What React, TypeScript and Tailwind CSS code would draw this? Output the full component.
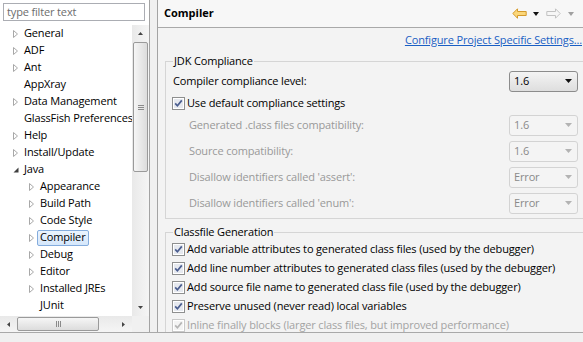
import React from "react";

type Node = { label: string; level: 0 | 1; kind: "closed" | "open" | "leaf"; selected?: boolean };

const tree: Node[] = [
  { label: "General", level: 0, kind: "closed" },
  { label: "ADF", level: 0, kind: "closed" },
  { label: "Ant", level: 0, kind: "closed" },
  { label: "AppXray", level: 0, kind: "leaf" },
  { label: "Data Management", level: 0, kind: "closed" },
  { label: "GlassFish Preferences", level: 0, kind: "leaf" },
  { label: "Help", level: 0, kind: "closed" },
  { label: "Install/Update", level: 0, kind: "closed" },
  { label: "Java", level: 0, kind: "open" },
  { label: "Appearance", level: 1, kind: "closed" },
  { label: "Build Path", level: 1, kind: "closed" },
  { label: "Code Style", level: 1, kind: "closed" },
  { label: "Compiler", level: 1, kind: "closed", selected: true },
  { label: "Debug", level: 1, kind: "closed" },
  { label: "Editor", level: 1, kind: "closed" },
  { label: "Installed JREs", level: 1, kind: "closed" },
  { label: "JUnit", level: 1, kind: "leaf" },
];

const compat = [
  { label: "Generated .class files compatibility:", value: "1.6" },
  { label: "Source compatibility:", value: "1.6" },
  { label: "Disallow identifiers called 'assert':", value: "Error" },
  { label: "Disallow identifiers called 'enum':", value: "Error" },
];

const classfile = [
  { label: "Add variable attributes to generated class files (used by the debugger)" },
  { label: "Add line number attributes to generated class files (used by the debugger)" },
  { label: "Add source file name to generated class file (used by the debugger)" },
  { label: "Preserve unused (never read) local variables" },
  { label: "Inline finally blocks (larger class files, but improved performance)", disabled: true },
];

function Twisty({ kind }: { kind: Node["kind"] }) {
  if (kind === "leaf") return null;
  if (kind === "open")
    return (
      <svg width="6" height="6" viewBox="0 0 6 6" className="mt-[1px]">
        <path d="M5.5 0.5 V5.5 H0.5 Z" fill="#3f3f3f" />
      </svg>
    );
  return (
    <svg width="5" height="8" viewBox="0 0 5 8">
      <path d="M0.5 0.5 L4.5 4 L0.5 7.5 Z" fill="#fff" stroke="#a8a8a8" />
    </svg>
  );
}

function Checkbox({ disabled }: { disabled?: boolean }) {
  return (
    <svg width="13" height="13" viewBox="0 0 13 13" className="shrink-0">
      <rect x="0.5" y="0.5" width="12" height="12" fill="#fff" stroke={disabled ? "#c9c9c9" : "#8e8f8f"} />
      <rect x="2" y="2" width="9" height="9" fill={disabled ? "#f4f4f4" : "#e6e9ef"} />
      <path
        d="M3.2 6.4 L5.4 8.8 L9.8 3.4"
        fill="none"
        stroke={disabled ? "#b5b5b5" : "#4a5d8f"}
        strokeWidth="1.7"
      />
    </svg>
  );
}

function Combo({ value, disabled }: { value: string; disabled?: boolean }) {
  return (
    <div
      className={`flex h-[21px] w-[69px] shrink-0 items-center justify-between rounded-[3px] border pl-[4px] pr-[5px] ${
        disabled
          ? "border-[#d3d3d3] bg-[#f4f4f4] text-[#8a8a8a]"
          : "border-[#8c8c8c] bg-gradient-to-b from-[#f4f4f4] to-[#dedede] text-black"
      }`}
    >
      <span>{value}</span>
      <svg width="7" height="4" viewBox="0 0 7 4">
        <path d="M0 0 H7 L3.5 4 Z" fill={disabled ? "#b3b3b3" : "#111"} />
      </svg>
    </div>
  );
}

function NavArrow({ back }: { back?: boolean }) {
  return (
    <svg width="15" height="11" viewBox="0 0 15 11" className={back ? "" : "scale-x-[-1]"}>
      <path
        d="M0.8 5.5 L5.5 0.8 V3.5 H14.2 V7.5 H5.5 V10.2 Z"
        fill={back ? "#fbd77a" : "#f6f6f6"}
        stroke={back ? "#d49a2c" : "#c2c2c2"}
        strokeLinejoin="round"
      />
    </svg>
  );
}

function SmallDown({ color }: { color: string }) {
  return (
    <svg width="6" height="4" viewBox="0 0 6 4">
      <path d="M0 0 H6 L3 4 Z" fill={color} />
    </svg>
  );
}

function VScroll() {
  return (
    <div className="flex w-[17px] shrink-0 flex-col bg-gradient-to-r from-[#e9e9e9] to-[#f5f5f5]">
      <div className="flex h-[17px] items-center justify-center">
        <svg width="5" height="3" viewBox="0 0 5 3">
          <path d="M0 3 H5 L2.5 0 Z" fill="#444" />
        </svg>
      </div>
      <div className="mx-[1px] flex h-[130px] items-center justify-center rounded-[2px] border border-[#9a9a9a] bg-gradient-to-r from-[#f6f6f6] to-[#dcdcdc]">
        <div className="flex flex-col gap-[1px]">
          <div className="h-[1px] w-[6px] bg-[#8a8a8a]" />
          <div className="h-[1px] w-[6px] bg-[#8a8a8a]" />
          <div className="h-[1px] w-[6px] bg-[#8a8a8a]" />
        </div>
      </div>
      <div className="flex-1" />
      <div className="flex h-[17px] items-center justify-center">
        <svg width="5" height="3" viewBox="0 0 5 3">
          <path d="M0 0 H5 L2.5 3 Z" fill="#444" />
        </svg>
      </div>
    </div>
  );
}

function HScroll() {
  return (
    <div className="flex h-[16px] flex-1 bg-gradient-to-b from-[#e9e9e9] to-[#f5f5f5]">
      <div className="flex w-[17px] items-center justify-center">
        <svg width="3" height="5" viewBox="0 0 3 5">
          <path d="M3 0 V5 L0 2.5 Z" fill="#444" />
        </svg>
      </div>
      <div className="my-[1px] flex w-[82px] items-center justify-center gap-[1px] rounded-[2px] border border-[#9a9a9a] bg-gradient-to-b from-[#f6f6f6] to-[#dcdcdc]">
        <div className="h-[6px] w-[1px] bg-[#8a8a8a]" />
        <div className="h-[6px] w-[1px] bg-[#8a8a8a]" />
        <div className="h-[6px] w-[1px] bg-[#8a8a8a]" />
      </div>
      <div className="flex-1" />
      <div className="flex w-[17px] items-center justify-center">
        <svg width="3" height="5" viewBox="0 0 3 5">
          <path d="M0 0 V5 L3 2.5 Z" fill="#444" />
        </svg>
      </div>
    </div>
  );
}

export default function App() {
  return (
    <div className="flex h-[342px] w-[583px] flex-col overflow-hidden bg-[#f0f0f0] font-['Open_Sans',sans-serif] text-[11px] tracking-[-0.15px] text-black">
      <div className="flex h-[332px] min-h-0">
        {/* preference tree */}
        <div className="flex w-[150px] shrink-0 flex-col border-r border-[#a3a3a3] bg-white">
          <div className="px-[3px] pb-[4px] pt-[3px]">
            <div className="flex h-[18px] w-[142px] items-center border border-[#abadb3] pl-[3px] text-[#6d6d6d]">
              type filter text
            </div>
          </div>
          <div className="flex min-h-0 flex-1">
            <div className="min-w-0 flex-1 overflow-hidden">
              {tree.map((n) => (
                <div
                  key={n.label}
                  className={`flex h-[17px] items-center whitespace-nowrap ${n.level === 0 ? "pl-[11px]" : "pl-[27px]"}`}
                >
                  <div className="flex w-[10px] shrink-0 items-center pl-[2px]">
                    <Twisty kind={n.kind} />
                  </div>
                  <span
                    className={`flex h-[16px] items-center rounded-[2px] border px-[2px] ${
                      n.selected ? "border-[#84acdd] bg-gradient-to-b from-[#ebf4fe] to-[#d5e7fb]" : "border-transparent"
                    }`}
                  >
                    {n.label}
                  </span>
                </div>
              ))}
            </div>
            <VScroll />
          </div>
          <div className="flex">
            <HScroll />
            <div className="w-[17px] bg-[#f0f0f0]" />
          </div>
        </div>

        {/* sash */}
        <div className="w-[7px] shrink-0" />

        {/* preference page */}
        <div className="flex min-w-0 flex-1 flex-col overflow-hidden border-l border-[#a3a3a3] bg-[#f3f3f3]">
          <div className="flex h-[28px] shrink-0 items-center justify-between border-b border-[#a9a9a9] bg-[#f7f7f7] pl-[6px] pr-[9px]">
            <span className="font-bold tracking-normal">Compiler</span>
            <div className="flex items-center">
              <NavArrow back />
              <div className="ml-[6px] mr-[7px]">
                <SmallDown color="#111" />
              </div>
              <NavArrow />
              <div className="ml-[7px]">
                <SmallDown color="#a0a0a0" />
              </div>
            </div>
          </div>

          <div className="pl-[7px]">
            <div className="flex h-[24px] items-center justify-end pr-[1px]">
              <span className="text-[#1a5fc4] underline">Configure Project Specific Settings...</span>
            </div>

            <fieldset className="mt-[1px] w-[432px] border border-[#d5d5d5] pb-[4px] pl-[7px] pr-[18px]">
              <legend className="px-[1px] leading-[16px]">JDK Compliance</legend>
              <div className="flex h-[23px] items-center justify-between pt-[1px]">
                <span>Compiler compliance level:</span>
                <Combo value="1.6" />
              </div>
              <div className="-ml-[1px] flex h-[22px] items-center gap-[2px]">
                <Checkbox />
                <span>Use default compliance settings</span>
              </div>
              <div className="flex flex-col gap-[4px]">
                {compat.map((c) => (
                  <div key={c.label} className="flex h-[22px] items-center justify-between">
                    <span className="pl-[16px] text-[#999]">{c.label}</span>
                    <Combo value={c.value} disabled />
                  </div>
                ))}
              </div>
            </fieldset>

            <fieldset className="mt-[5px] w-[432px] border border-[#d5d5d5] pl-[7px] pr-[18px]">
              <legend className="px-[1px] leading-[16px]">Classfile Generation</legend>
              {classfile.map((c) => (
                <div key={c.label} className="-ml-[1px] flex h-[19px] items-center gap-[2px] whitespace-nowrap">
                  <Checkbox disabled={c.disabled} />
                  <span className={c.disabled ? "text-[#a3a3a3]" : ""}>{c.label}</span>
                </div>
              ))}
            </fieldset>
          </div>
        </div>
      </div>
      <div className="h-[10px] shrink-0 border-t border-[#a9a9a9] bg-[#f0f0f0]" />
    </div>
  );
}
